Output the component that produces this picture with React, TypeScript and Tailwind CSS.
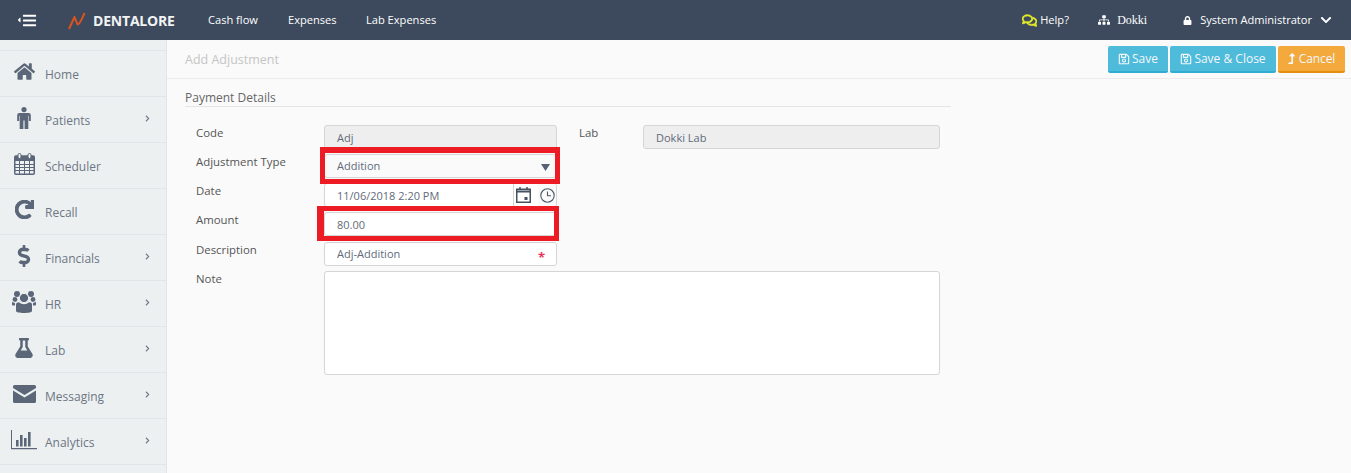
import React from "react";
import {
  FaHome, FaRedo, FaDollarSign, FaFlask,
  FaChevronRight, FaChevronDown, FaRegSave, FaLevelUpAlt, FaRegComments, FaSitemap, FaLock, FaBars, FaCaretLeft,
} from "react-icons/fa";

const Male = () => (
  <svg width="14" height="22" viewBox="0 0 14 22" fill="currentColor">
    <circle cx="7" cy="2.6" r="2.6" />
    <path d="M2.5 6h9A2.2 2.2 0 0 1 13.8 8.2V14h-1.9V8.8h-.6V22H7.6v-8.5H6.4V22H2.7V8.8h-.6V14H.2V8.2A2.2 2.2 0 0 1 2.5 6z" />
  </svg>
);

const CalendarGrid = () => (
  <svg width="21" height="22" viewBox="0 0 21 22" fill="none" stroke="currentColor">
    <rect x="0.75" y="3" width="19.5" height="18.25" rx="1" strokeWidth="1.5" />
    <rect x="1" y="3" width="19" height="5" fill="currentColor" strokeWidth="0" />
    <path d="M1 11.5h19M1 14.5h19M1 17.5h19M5.5 8v13M10.5 8v13M15.5 8v13" strokeWidth="1" />
    <rect x="4" y="0.5" width="3" height="5" rx="1.4" fill="#ecf0f1" strokeWidth="1" />
    <rect x="14" y="0.5" width="3" height="5" rx="1.4" fill="#ecf0f1" strokeWidth="1" />
  </svg>
);

const People = () => (
  <svg width="24" height="22" viewBox="0 0 24 22" fill="currentColor">
    <circle cx="5" cy="3" r="3" />
    <circle cx="19" cy="3" r="3" />
    <circle cx="3" cy="8.5" r="2.4" />
    <circle cx="21" cy="8.5" r="2.4" />
    <circle cx="12" cy="7" r="4.6" stroke="#ecf0f1" strokeWidth="1" />
    <path d="M4 13.5c0-1.4 1.4-2.2 3-2.2 1.4 1.2 3 1.9 5 1.9s3.6-.7 5-1.9c1.6 0 3 .8 3 2.2V20c0 1.2-3.5 2-8 2s-8-.8-8-2z" />
    <path d="M0 10.5c.8 1 1.8 1.4 3 1.4v2.6H1.2C.5 14.5 0 14 0 13.2zM24 10.5c-.8 1-1.8 1.4-3 1.4v2.6h1.8c.7 0 1.2-.5 1.2-1.3z" />
  </svg>
);

const Mail = () => (
  <svg width="23" height="18" viewBox="0 0 23 18" fill="currentColor">
    <path d="M1.5 0h20A1.5 1.5 0 0 1 23 1.5V3l-11.5 7L0 3V1.5A1.5 1.5 0 0 1 1.5 0z" />
    <path d="M0 5.5l11.5 7 11.5-7v11A1.5 1.5 0 0 1 21.5 18h-20A1.5 1.5 0 0 1 0 16.5z" />
  </svg>
);

const Bars = () => (
  <svg width="26" height="20" viewBox="0 0 26 20" fill="currentColor">
    <path d="M0 0h1v18h25v1.2H0z" />
    <rect x="5" y="10" width="2.6" height="6.5" />
    <rect x="9" y="5" width="2.6" height="11.5" />
    <rect x="13" y="8" width="2.6" height="8.5" />
    <rect x="17" y="2" width="2.6" height="14.5" />
  </svg>
);

const DateIcon = () => (
  <svg width="15" height="16" viewBox="0 0 15 16" fill="none" stroke="#46525f">
    <rect x="0.75" y="2.25" width="13.5" height="13" strokeWidth="1.5" />
    <path d="M0.75 4.6h13.5" strokeWidth="2" />
    <path d="M4 0v3M11 0v3" strokeWidth="1.5" />
    <rect x="8.5" y="10" width="3" height="3" fill="#46525f" strokeWidth="0" />
  </svg>
);

const ClockIcon = () => (
  <svg width="15" height="15" viewBox="0 0 15 15" fill="none" stroke="#4d5967" strokeWidth="1.1">
    <circle cx="7.5" cy="7.5" r="6.7" />
    <path d="M7.5 3.5v4.3h3.5" />
  </svg>
);

const nav = [
  { label: "Home", icon: <FaHome className="text-[21px]" />, arrow: false },
  { label: "Patients", icon: <Male />, arrow: true },
  { label: "Scheduler", icon: <CalendarGrid />, arrow: false },
  { label: "Recall", icon: <FaRedo className="text-[19px] [&_path]:stroke-[#5b6779] [&_path]:[stroke-width:30]" />, arrow: false },
  { label: "Financials", icon: <FaDollarSign className="text-[22px]" />, arrow: true },
  { label: "HR", icon: <People />, arrow: true },
  { label: "Lab", icon: <FaFlask className="text-[20px]" />, arrow: true },
  { label: "Messaging", icon: <Mail />, arrow: true },
  { label: "Analytics", icon: <Bars />, arrow: true },
];

function Label({ children, w = "w-[128px]" }: { children: React.ReactNode; w?: string }) {
  return <div className={`${w} shrink-0 text-[11.4px] leading-[16px] text-[#555]`}>{children}</div>;
}

function Box({ children, className = "" }: { children?: React.ReactNode; className?: string }) {
  return (
    <div className={`flex h-[24px] items-center rounded-[3px] border border-[#d5d5d5] pl-[12px] text-[11px] text-[#5f6b7a] ${className}`}>
      {children}
    </div>
  );
}

function Btn({ icon, label, cls }: { icon: React.ReactNode; label: string; cls: string }) {
  return (
    <div className={`flex h-[27px] items-center justify-center gap-[2px] rounded-[2px] border-b-[2px] text-[12px] text-[#f2f7fa] ${cls}`}>
      {icon}
      <span>{label}</span>
    </div>
  );
}

export default function App() {
  return (
    <div className="flex h-[473px] w-[1351px] flex-col overflow-hidden bg-[#fafafa] font-['Open_Sans',sans-serif]">
      <header className="flex h-[40px] shrink-0 items-center bg-[#3d4a5d] text-[11.1px] text-white">
        <div className="ml-[15px] flex w-[51px] items-center">
          <FaCaretLeft className="-mr-[1px] text-[8px]" />
          <FaBars className="text-[15px]" />
        </div>
        <svg width="20" height="20" viewBox="0 0 20 20" className="ml-[1px]">
          <path d="M2 19 L7.5 7 L10.5 14.5 C13 14.5 15 9 17.5 3" fill="none" stroke="#d9541e" strokeWidth="2" strokeLinejoin="round" />
        </svg>
        <div className="ml-[6px] w-[115px] text-[14px] font-bold tracking-[-0.2px] text-[#f1f3f5]">DENTALORE</div>
        <div className="w-[80px]">Cash flow</div>
        <div className="w-[78px]">Expenses</div>
        <div>Lab Expenses</div>
        <div className="flex-1" />
        <FaRegComments className="text-[15px] text-[#e6ef2a] [&_path]:stroke-[#e6ef2a] [&_path]:[stroke-width:25]" />
        <span className="ml-[3px] w-[58px]">Help?</span>
        <FaSitemap className="text-[12px]" />
        <span className="ml-[7px] w-[66px] font-['Liberation_Serif',serif] text-[12px]">Dokki</span>
        <FaLock className="text-[9px]" />
        <span className="ml-[8px]">System Administrator</span>
        <FaChevronDown className="ml-[8px] mr-[19px] text-[12px]" />
      </header>
      <div className="flex min-h-0 flex-1">
        <aside className="w-[167px] shrink-0 border-r border-[#e1e5e8] bg-[#ecf0f1] pt-[10px]">
          {nav.map((n) => (
            <div key={n.label} className="flex h-[46px] items-center border-t border-[#e1e5e8] text-[12px] text-[#6d7684]">
              <div className="flex w-[45px] shrink-0 -translate-y-[2px] justify-center pl-[3px] text-[#5b6779]">{n.icon}</div>
              <span className="flex-1 pt-[2px]">{n.label}</span>
              {n.arrow && <FaChevronRight className="mr-[15px] -translate-y-[1px] text-[7px]" />}
            </div>
          ))}
          <div className="border-t border-[#e1e5e8]" />
        </aside>
        <main className="min-w-0 flex-1">
          <div className="flex h-[39px] items-center justify-between border-b border-[#ececec] pl-[18px] pr-[6px]">
            <div className="pt-[3px] text-[12.5px] text-[#c5c5c5]">Add Adjustment</div>
            <div className="flex gap-[2px] pt-[1px]">
              <Btn icon={<FaRegSave className="text-[12px]" />} label="Save" cls="w-[60px] bg-[#4fbbdb] border-[#2eacd1]" />
              <Btn icon={<FaRegSave className="text-[12px]" />} label="Save & Close" cls="w-[106px] bg-[#4fbbdb] border-[#2eacd1]" />
              <Btn icon={<FaLevelUpAlt className="text-[11px]" />} label="Cancel" cls="w-[67px] bg-[#f4a93d] border-[#e58e10] pr-[2px] tracking-[-0.1px]" />
            </div>
          </div>
          <div className="pl-[18px]">
            <div className="mt-[11px] h-[17px] w-[766px] border-b border-[#e4e4e4] text-[12px] leading-[15px] text-[#666]">Payment Details</div>
            <div className="mt-[18px] flex flex-col pl-[11px]">
              <div className="flex">
                <Label>Code</Label>
                <Box className="w-[233px] bg-[#eeeeee] pt-[2px]">Adj</Box>
                <Label w="w-[64px] ml-[22px]">Lab</Label>
                <Box className="w-[297px] bg-[#eeeeee] pt-[2px]">Dokki Lab</Box>
              </div>
              <div className="mt-[5px] flex">
                <Label>Adjustment Type</Label>
                <div className="relative w-[233px]">
                  <Box className="bg-[#fafafa] pr-[5px]">
                    <span className="flex-1">Addition</span>
                    <svg width="9" height="7" viewBox="0 0 9 7" className="mr-[1px] translate-y-[1px]" fill="#566274">
                      <path d="M0 0h9L4.5 7z" />
                    </svg>
                  </Box>
                  <div className="absolute -bottom-[6px] -left-[4px] -right-[3px] -top-[7px] border-[5px] border-t-[6px] border-[#ed1c24]" />
                </div>
              </div>
              <div className="mt-[5px] flex">
                <Label>Date</Label>
                <Box className="w-[233px] overflow-hidden bg-white">
                  <span className="flex-1 translate-y-[1px] text-[#5f6b7a]">11/06/2018 2:20 PM</span>
                  <div className="flex h-full w-[25px] items-center justify-start border-l border-[#d5d5d5] bg-white pl-[2px]">
                    <DateIcon />
                  </div>
                  <div className="flex h-full w-[18px] items-center justify-start bg-[#fafafa] pl-[2px]">
                    <ClockIcon />
                  </div>
                </Box>
              </div>
              <div className="mt-[5px] flex">
                <Label>Amount</Label>
                <div className="relative w-[233px]">
                  <Box className="bg-white pt-[2px]">80.00</Box>
                  <div className="absolute -bottom-[5px] -left-[7px] -right-[2px] -top-[6px] border-[5px] border-l-[7px] border-[#ed1c24]" />
                </div>
              </div>
              <div className="mt-[6px] flex">
                <Label>Description</Label>
                <Box className="w-[233px] bg-white">
                  <span className="flex-1">Adj-Addition</span>
                  <span className="mr-[11px] translate-y-[4px] text-[13px] font-bold text-[#e8365d]">*</span>
                </Box>
              </div>
              <div className="mt-[5px] flex">
                <Label>Note</Label>
                <div className="h-[104px] w-[616px] rounded-[3px] border border-[#d5d5d5] bg-white" />
              </div>
            </div>
          </div>
        </main>
      </div>
    </div>
  );
}
